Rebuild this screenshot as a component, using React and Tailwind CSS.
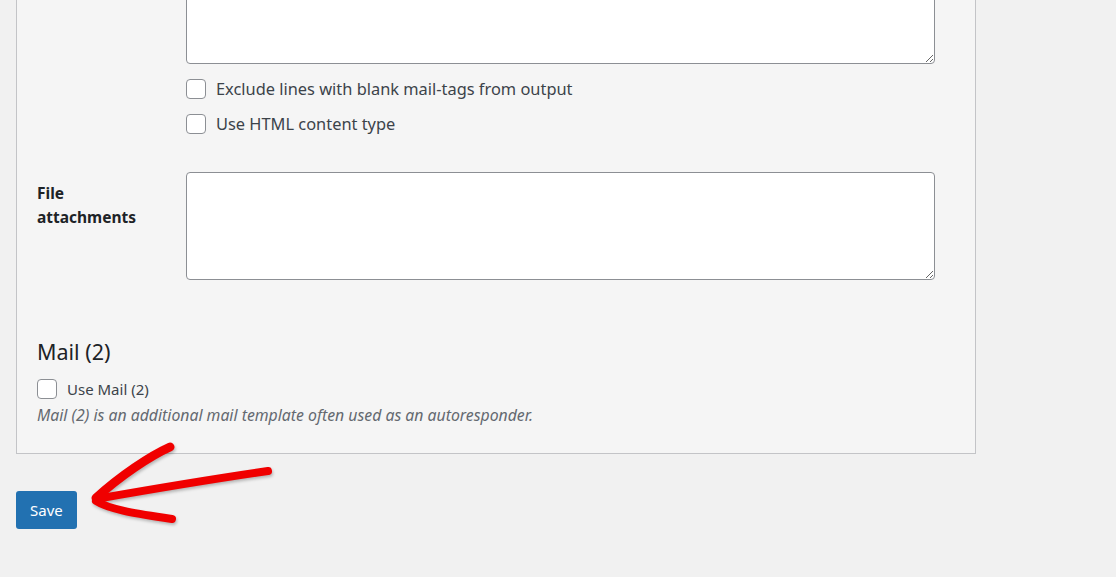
import React from 'react';

const font = { fontFamily: '"Noto Sans", "Open Sans", Arial, sans-serif' };

function Check({ label, className = '' }) {
  return (
    <label className={`flex items-center gap-[10px] ${className}`}>
      <span className="w-[20px] h-[20px] rounded-[4px] border border-[#8c8f94] bg-white shrink-0" />
      <span>{label}</span>
    </label>
  );
}

function Arrow() {
  return (
    <svg
      className="absolute left-0 top-0 pointer-events-none"
      width="1116"
      height="577"
      viewBox="0 0 1116 577"
      style={{ filter: 'drop-shadow(1px 2px 1.5px rgba(0,0,0,0.25))' }}
    >
      <g fill="none" stroke="#f00000" strokeLinecap="round" strokeLinejoin="round">
        <path d="M170 447 C 150 456, 120 476, 96 498" strokeWidth="9" />
        <path d="M268 471 C 220 478, 170 486, 96 499" strokeWidth="8" />
        <path d="M96 501 C 110 510, 140 514, 172 519" strokeWidth="8" />
      </g>
    </svg>
  );
}

export default function App() {
  return (
    <div className="relative w-[1116px] h-[577px] overflow-hidden bg-[#f1f1f1] text-[#3c434a]" style={font}>
      <div className="ml-[16px] w-[960px] -mt-[36px] bg-[#f5f5f5] border-x border-b border-[#c3c4c7] px-[20px] pb-[28px]">
        <div className="grid grid-cols-[149px_749px]">
          <div />
          <div>
            <textarea className="block w-[749px] h-[100px] bg-white border border-[#8c8f94] rounded-[4px]" />
            <Check label="Exclude lines with blank mail-tags from output" className="mt-[15px] h-[20px] text-[16.4px]" />
            <Check label="Use HTML content type" className="mt-[15px] h-[20px] text-[16.4px]" />
          </div>
        </div>

        <div className="grid grid-cols-[149px_749px] mt-[38px]">
          <div className="pt-[9px] font-bold text-[15.5px] leading-[24px] text-[#1d2327]">
            File
            <br />
            attachments
          </div>
          <textarea className="block w-[749px] h-[108px] bg-white border border-[#8c8f94] rounded-[4px]" />
        </div>

        <h2 className="mt-[58px] text-[21.5px] leading-[28px] text-[#1d2327]">Mail (2)</h2>
        <Check label="Use Mail (2)" className="mt-[13px] h-[20px] text-[15px]" />
        <p className="mt-[6px] text-[15.8px] leading-[20px] italic text-[#646970]">
          Mail (2) is an additional mail template often used as an autoresponder.
        </p>
      </div>

      <button className="ml-[16px] mt-[37px] h-[38px] px-[14px] bg-[#2271b1] text-white text-[15px] rounded-[3px]">
        Save
      </button>

      <Arrow />
    </div>
  );
}
